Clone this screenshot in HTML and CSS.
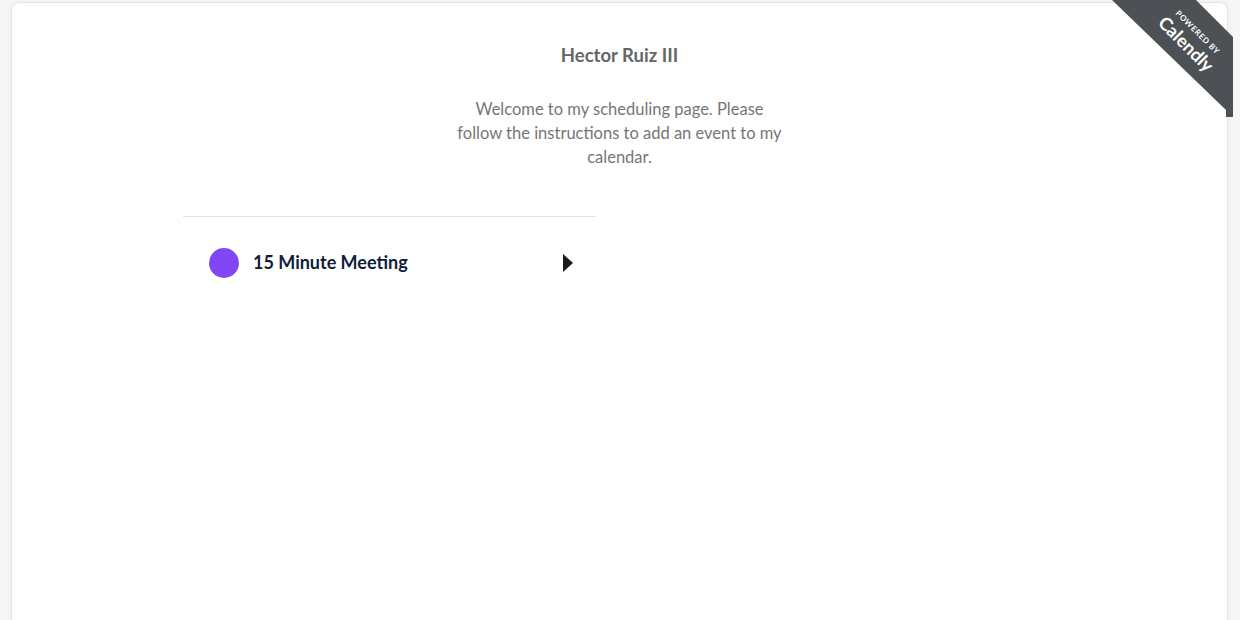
FILE: index.html
```html
<!DOCTYPE html>
<html lang="en">
<head>
<meta charset="utf-8">
<title>Hector Ruiz III</title>
<link rel="stylesheet" href="styles.css">
</head>
<body>
<div class="page">
  <main class="card">
    <header class="profile">
      <h1 class="profile-name">Hector Ruiz III</h1>
      <p class="profile-message">Welcome to my scheduling page. Please follow the instructions to add an event to my calendar.</p>
    </header>
    <section class="events">
      <a class="event" href="#">
        <span class="event-dot"></span>
        <span class="event-name">15 Minute Meeting</span>
        <svg class="event-arrow" width="10" height="18" viewBox="0 0 10 18" aria-hidden="true"><path d="M0 0 L10 9 L0 18 Z" fill="#1a1a1a"/></svg>
      </a>
    </section>
  </main>
  <a class="badge" href="#">
    <span class="badge-text">
      <span class="badge-powered">POWERED BY</span>
      <span class="badge-brand">Calendly</span>
    </span>
  </a>
</div>
</body>
</html>
```
FILE: styles.css
```css
html, body {
  margin: 0;
  padding: 0;
}
body {
  background: #f7f7f7;
  font-family: "Lato", "Open Sans", sans-serif;
  overflow: hidden;
}
.page {
  position: relative;
  padding: 2px 12px 0 11px;
}
.card {
  background: #ffffff;
  border: 1px solid #e4e4e4;
  border-radius: 8px;
  box-shadow: 0 1px 6px rgba(0, 0, 0, 0.06);
  min-height: 720px;
  box-sizing: border-box;
  padding-top: 40px;
}
.profile {
  display: flex;
  flex-direction: column;
  align-items: center;
  text-align: center;
}
.profile-name {
  margin: 0;
  font-size: 18.5px;
  line-height: 24px;
  font-weight: 700;
  color: #666666;
}
.profile-message {
  margin: 30px 0 0;
  width: 330px;
  font-size: 16.5px;
  line-height: 24px;
  color: #767676;
}
.events {
  width: 873px;
  margin: 47px auto 0;
  display: grid;
  grid-template-columns: 413px 413px;
  column-gap: 47px;
}
.event {
  display: flex;
  align-items: center;
  height: 92px;
  border-top: 1px solid #e2e2e2;
  padding: 0 23px 0 26px;
  text-decoration: none;
}
.event-dot {
  width: 30px;
  height: 30px;
  border-radius: 50%;
  background: #8247f5;
  flex: none;
}
.event-name {
  margin-left: 14px;
  flex: 1;
  font-size: 18px;
  line-height: 22px;
  font-weight: 700;
  color: #0e2038;
  position: relative;
  top: -1px;
}
.event-arrow {
  flex: none;
}
.badge {
  position: absolute;
  top: 0;
  left: 1112px;
  width: 121px;
  height: 117px;
  background: #4d5055;
  clip-path: polygon(0 0, 84px 0, 121px 37px, 121px 117px, 114px 117px, 114px 110px, 0 0);
  text-decoration: none;
}
.badge-text {
  position: absolute;
  left: 18px;
  top: 24px;
  width: 120px;
  height: 32px;
  display: flex;
  flex-direction: column;
  align-items: center;
  transform: rotate(45deg);
  color: #ffffff;
  font-family: "Lato", "Open Sans", sans-serif;
}
.badge-powered {
  font-size: 8px;
  line-height: 11px;
  font-weight: 700;
  letter-spacing: 0.6px;
}
.badge-brand {
  font-size: 18px;
  line-height: 20px;
  font-weight: 700;
}
```
